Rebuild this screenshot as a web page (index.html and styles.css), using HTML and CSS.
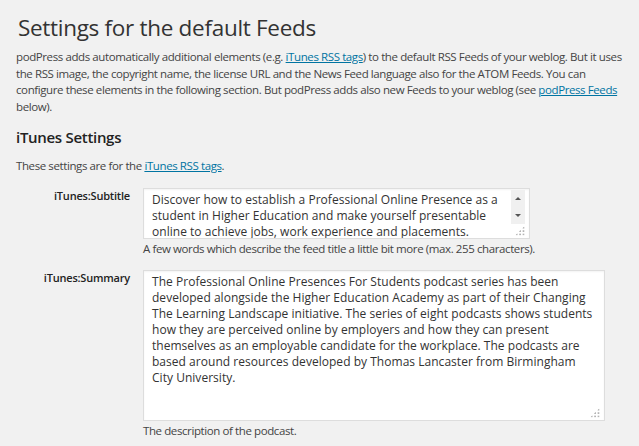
FILE: index.html
```html
<!DOCTYPE html>
<html lang="en">

<head>
  <meta charset="UTF-8" />
  <title>podPress - Feed Settings</title>
  <link rel="stylesheet" href="styles.css">
</head>

<body>
  <div class="wrap">
    <!-- Default feeds -->
    <h2>Settings for the default Feeds</h2>
    <p class="intro">podPress adds automatically additional elements (e.g. <a href="#">iTunes RSS tags</a>) to the default RSS Feeds of your weblog. But it uses the RSS image, the copyright name, the license URL and the News Feed language also for the ATOM Feeds. You can configure these elements in the following section. But podPress adds also new Feeds to your weblog (see <a href="#">podPress Feeds</a> below).</p>

    <!-- iTunes -->
    <h3>iTunes Settings</h3>
    <p class="note">These settings are for the <a href="#">iTunes RSS tags</a>.</p>

    <table class="form-table">
      <tr>
        <th><label for="subtitle">iTunes:Subtitle</label></th>
        <td>
          <div class="field field-subtitle">
            <textarea id="subtitle" rows="3">Discover how to establish a Professional Online Presence as a student in Higher Education and make yourself presentable online to achieve jobs, work experience and placements.</textarea>
            <div class="scrollbar">
              <span class="arrow up"></span>
              <span class="arrow down"></span>
            </div>
            <span class="grip"></span>
          </div>
          <p class="description">A few words which describe the feed title a little bit more (max. 255 characters).</p>
        </td>
      </tr>
      <tr>
        <th><label for="summary">iTunes:Summary</label></th>
        <td>
          <div class="field field-summary">
            <textarea id="summary" rows="9">The Professional Online Presences For Students podcast series has been developed alongside the Higher Education Academy as part of their Changing The Learning Landscape initiative. The series of eight podcasts shows students how they are perceived online by employers and how they can present themselves as an employable candidate for the workplace. The podcasts are based around resources developed by Thomas Lancaster from Birmingham City University.</textarea>
            <span class="grip"></span>
          </div>
          <p class="description">The description of the podcast.</p>
        </td>
      </tr>
    </table>
  </div>
</body>

</html>
```

FILE: styles.css
```css
/* --- Base --- */
body {
  margin: 0;
  background: #f1f1f1;
  color: #444;
  font-family: "Open Sans", sans-serif;
  font-size: 11.5px;
  letter-spacing: -0.4px;
  line-height: 16.5px;
}

a {
  color: #0074a2;
}

.wrap {
  padding: 13px 10px 0 16px;
}

/* --- Headings --- */
h2 {
  margin: 0 0 0 2px;
  font-size: 22.5px;
  font-weight: 400;
  letter-spacing: -0.3px;
  line-height: 29px;
  color: #333;
}

.intro {
  margin: 7px 0 0;
}

h3 {
  margin: 12px 0 0;
  font-size: 15px;
  font-weight: 600;
  letter-spacing: -0.3px;
  line-height: 20px;
  color: #222;
}

.note {
  margin: 11px 0 0;
}

/* --- Form table --- */
.form-table {
  border-collapse: collapse;
  margin-top: 13px;
}

.form-table th {
  width: 114px;
  padding: 0 13px 0 0;
  vertical-align: top;
  text-align: right;
  font-size: 11px;
  font-weight: 600;
  letter-spacing: -0.2px;
  line-height: 16px;
  color: #222;
}

.form-table td {
  padding: 0 0 13px;
  vertical-align: top;
}

.field {
  position: relative;
  background: #fff;
  border: 1px solid #ddd;
  box-shadow: inset 0 1px 2px rgba(0, 0, 0, 0.05);
}

.field textarea {
  display: block;
  width: 100%;
  box-sizing: border-box;
  border: 0;
  margin: 0;
  padding: 3px 8px 3px 8px;
  background: transparent;
  resize: none;
  overflow: hidden;
  font-family: "Open Sans", sans-serif;
  font-size: 12px;
  letter-spacing: 0.03px;
  line-height: 16px;
  color: #333;
}

.field-subtitle {
  width: 385px;
}

.field-subtitle textarea {
  height: 49px;
  padding-right: 20px;
}

.field-summary {
  width: 460px;
}

.field-summary textarea {
  height: 149px;
}

/* fake scrollbar */
.scrollbar {
  position: absolute;
  top: 1px;
  right: 4px;
  width: 14px;
  height: 34px;
  background: #f0f0f0;
}

.arrow {
  position: absolute;
  left: 4px;
  width: 0;
  height: 0;
  border-left: 3px solid transparent;
  border-right: 3px solid transparent;
}

.arrow.up {
  top: 7px;
  border-bottom: 3px solid #555;
}

.arrow.down {
  top: 24px;
  border-top: 3px solid #555;
}

/* resize grip */
.grip {
  position: absolute;
  right: 4px;
  bottom: 2px;
  width: 10px;
  height: 10px;
  background:
    radial-gradient(circle, #b4b4b4 0.9px, transparent 1.2px) 0 0 / 3.4px 3.4px;
  clip-path: polygon(100% 0, 100% 100%, 0 100%);
}

.description {
  margin: 2px 0 0;
  line-height: 16px;
}
```
